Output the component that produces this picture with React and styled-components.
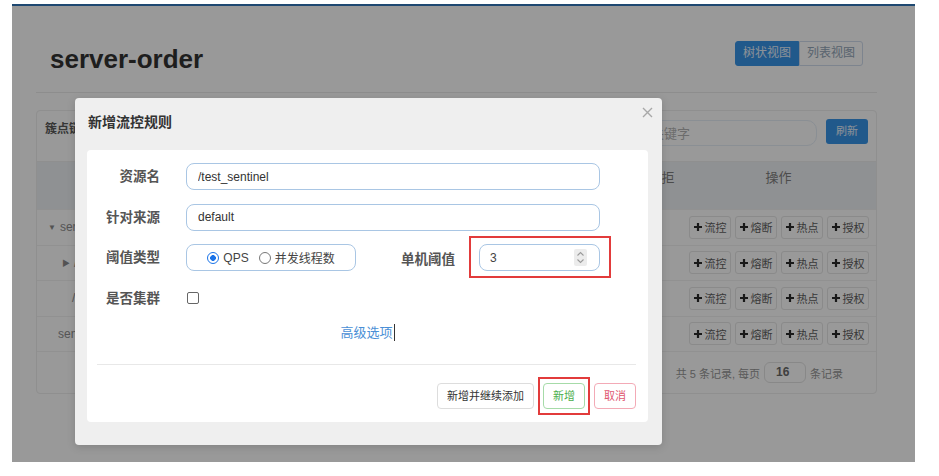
import styled, { createGlobalStyle, css } from "styled-components";

const GlobalStyle = createGlobalStyle`
  html, body {
    margin: 0;
    padding: 0;
    background: #fff;
  }
  body {
    font-family: "Liberation Sans", "Noto Sans CJK SC", sans-serif;
  }
  * {
    box-sizing: border-box;
  }
`;

const rows = [
  { name: "server-order", indent: 11, arrow: "▼" },
  { name: "/test_sentinel", indent: 25, arrow: "▶" },
  { name: "/test_sentinel", indent: 35 },
  { name: "sentinel_default_context", indent: 21 },
];

const columns = ["资源名", "通过QPS", "拒绝QPS", "并发数", "平均RT", "分钟通过", "分钟拒绝", "操作"];

const actions = ["流控", "熔断", "热点", "授权"];

const PlusIcon = () => (
  <svg width="8" height="8" viewBox="0 0 8 8">
    <path d="M4 0v8M0 4h8" stroke="#2b2b2b" strokeWidth="2.2" />
  </svg>
);

const CloseIcon = () => (
  <svg width="11" height="11" viewBox="0 0 11 11">
    <path d="M1 1L10 10M10 1L1 10" stroke="#a8a8a8" strokeWidth="1.4" />
  </svg>
);

const SpinIcon = () => (
  <svg width="13" height="17" viewBox="0 0 13 17">
    <rect width="13" height="17" rx="2" fill="#ececec" />
    <path d="M3.5 6.5L6.5 3.5L9.5 6.5M3.5 10.5L6.5 13.5L9.5 10.5" stroke="#9a9a9a" strokeWidth="1.1" fill="none" />
  </svg>
);

const App = () => {
  return (
    <>
      <GlobalStyle />
      <Frame>
        <TopBar />
        <Body>
          <Content>
            <PageHeader>
              <Title>server-order</Title>
              <ViewSwitch>
                <ViewBtn $active>树状视图</ViewBtn>
                <ViewBtn>列表视图</ViewBtn>
              </ViewSwitch>
            </PageHeader>

            <Panel>
              <PanelHead>
                <PanelTitle>簇点链路</PanelTitle>
                <Search placeholder="请输入关键字" readOnly />
                <RefreshBtn>刷新</RefreshBtn>
              </PanelHead>

              <HeadRow>
                {columns.map((c) => (
                  <HeadCell key={c}>{c}</HeadCell>
                ))}
              </HeadRow>

              {rows.map((r, i) => (
                <Row key={i}>
                  <ResCell style={{ paddingLeft: r.indent }}>
                    {r.arrow && <Arrow>{r.arrow}</Arrow>}
                    {r.name}
                  </ResCell>
                  <Cell />
                  <Cell />
                  <Cell />
                  <Cell />
                  <Cell />
                  <Cell />
                  <ActionCell>
                    {actions.map((a) => (
                      <ActionBtn key={a}>
                        <PlusIcon />
                        {a}
                      </ActionBtn>
                    ))}
                  </ActionCell>
                </Row>
              ))}

              <Pager>
                <span>共 5 条记录, 每页</span>
                <PageSize>16</PageSize>
                <span>条记录</span>
              </Pager>
            </Panel>
          </Content>
          <Scrollbar />
        </Body>

        <Backdrop />

        <Modal>
          <ModalHead>
            <ModalTitle>新增流控规则</ModalTitle>
            <CloseIcon />
          </ModalHead>

          <Card>
            <Form>
              <Label>资源名</Label>
              <Input value="/test_sentinel" readOnly />

              <Label>针对来源</Label>
              <Input value="default" readOnly />

              <Label>阈值类型</Label>
              <Field>
                <RadioGroup>
                  <RadioItem>
                    <Radio $checked />
                    QPS
                  </RadioItem>
                  <RadioItem>
                    <Radio />
                    并发线程数
                  </RadioItem>
                </RadioGroup>
                <InlineLabel>单机阈值</InlineLabel>
                <Marked $inset="-8px -11px -7px -10px">
                  <NumberBox>
                    <span>3</span>
                    <SpinIcon />
                  </NumberBox>
                </Marked>
              </Field>

              <Label>是否集群</Label>
              <Field>
                <Checkbox />
              </Field>
            </Form>

            <AdvancedLink>高级选项</AdvancedLink>
            <Divider />

            <Footer>
              <Button>新增并继续添加</Button>
              <Marked $inset="-6px -5px -6px -5px">
                <Button $tone="green">新增</Button>
              </Marked>
              <Button $tone="red">取消</Button>
            </Footer>
          </Card>
        </Modal>
      </Frame>
    </>
  );
};

export default App;

const Frame = styled.div`
  position: relative;
  width: 903px;
  height: 458px;
  margin: 4px 0 0 12px;
  background: #fff;
  overflow: hidden;
`;

const TopBar = styled.div`
  height: 2px;
  background: #3279bd;
`;

const Body = styled.div`
  display: flex;
  height: 456px;
`;

const Content = styled.div`
  flex: 1;
  padding: 0 26px 0 24px;
`;

const Scrollbar = styled.div`
  width: 12px;
  background: #fff;
`;

const PageHeader = styled.div`
  height: 87px;
  padding: 35px 14px 0;
  display: flex;
  justify-content: space-between;
  align-items: flex-start;
  border-bottom: 1px solid #ececec;
`;

const Title = styled.h1`
  margin: 3px 0 0;
  font-size: 26px;
  line-height: 30px;
  font-weight: bold;
  color: #333;
`;

const ViewSwitch = styled.div`
  display: flex;
`;

const ViewBtn = styled.div`
  height: 25px;
  padding: 0 7px;
  font-size: 12px;
  line-height: 23px;
  border: 1px solid ${(p) => (p.$active ? "#3894e8" : "#d0dced")};
  background: ${(p) => (p.$active ? "#3894e8" : "#fff")};
  color: ${(p) => (p.$active ? "#e8f2fc" : "#93a6b8")};
  &:first-child {
    border-radius: 3px 0 0 3px;
  }
  &:last-child {
    border-radius: 0 3px 3px 0;
  }
`;

const Panel = styled.div`
  margin-top: 17px;
  border: 1px solid #eee;
  border-radius: 4px;
`;

const PanelHead = styled.div`
  height: 51px;
  padding: 9px 8px 0;
  display: flex;
  align-items: flex-start;
  border-bottom: 1px solid #eee;
`;

const PanelTitle = styled.div`
  font-size: 12px;
  line-height: 18px;
  font-weight: bold;
  color: #5a5a5a;
`;

const Search = styled.input`
  margin-left: auto;
  width: 218px;
  height: 26px;
  padding: 0 12px;
  border: 1px solid #e6eef7;
  border-radius: 10px;
  font-size: 13px;
  font-family: inherit;
  &::placeholder {
    color: #b5b5b5;
  }
`;

const RefreshBtn = styled.div`
  margin: -1px 0 0 9px;
  width: 42px;
  height: 25px;
  border-radius: 3px;
  background: #3894e8;
  color: #e8f2fc;
  font-size: 11px;
  line-height: 25px;
  text-align: center;
`;

const gridCols = css`
  display: grid;
  grid-template-columns: 2fr repeat(5, 1fr) 52px 195px;
`;

const HeadRow = styled.div`
  ${gridCols};
  height: 47px;
  background: #eff2f5;
`;

const HeadCell = styled.div`
  padding: 7px 4px 0;
  font-size: 13px;
  line-height: 18px;
  color: #7f7f7f;
  text-align: center;
`;

const Row = styled.div`
  ${gridCols};
  height: 35.5px;
  align-items: center;
  border-top: 1px solid #f2f2f2;
  &:nth-of-type(2) {
    border-top: none;
  }
`;

const ResCell = styled.div`
  display: flex;
  align-items: center;
  gap: 4px;
  font-size: 12px;
  color: #8e8e8e;
  white-space: nowrap;
`;

const Arrow = styled.span`
  font-size: 8px;
  color: #8a8a8a;
`;

const Cell = styled.div``;

const ActionCell = styled.div`
  display: flex;
  justify-content: center;
  gap: 4px;
  padding-left: 2px;
`;

const ActionBtn = styled.div`
  height: 23px;
  padding: 0 4px;
  display: flex;
  align-items: center;
  gap: 2px;
  border: 1px solid #e6e6e6;
  border-radius: 3px;
  background: #fff;
  font-size: 11px;
  color: #5e5e5e;
`;

const Pager = styled.div`
  height: 42px;
  padding-right: 33px;
  display: flex;
  justify-content: flex-end;
  align-items: center;
  gap: 4px;
  border-top: 1px solid #f2f2f2;
  font-size: 11px;
  color: #969696;
`;

const PageSize = styled.div`
  width: 42px;
  height: 21px;
  padding-left: 11px;
  border: 1px solid #e3e3e3;
  border-radius: 6px;
  background: #fff;
  font-size: 12px;
  line-height: 19px;
  font-weight: bold;
  color: #6a6a6a;
`;

const Backdrop = styled.div`
  position: absolute;
  inset: 0;
  background: rgba(0, 0, 0, 0.4);
`;

const Modal = styled.div`
  position: absolute;
  left: 63px;
  top: 94px;
  width: 587px;
  padding-bottom: 23px;
  background: #efefef;
  border-radius: 4px;
  box-shadow: 0 2px 8px rgba(0, 0, 0, 0.15);
`;

const ModalHead = styled.div`
  height: 52px;
  padding: 9px 9px 0 13px;
  display: flex;
  justify-content: space-between;
  align-items: flex-start;
`;

const ModalTitle = styled.div`
  margin-top: 5px;
  font-size: 14px;
  line-height: 20px;
  font-weight: bold;
  color: #333;
`;

const Card = styled.div`
  margin: 0 14px 0 12px;
  padding: 13px 0;
  background: #fff;
  border-radius: 4px;
`;

const Form = styled.div`
  display: grid;
  grid-template-columns: 73px 1fr;
  column-gap: 26px;
  row-gap: 13.5px;
  padding-right: 48px;
`;

const Label = styled.div`
  text-align: right;
  font-size: 13.5px;
  line-height: 27px;
  font-weight: bold;
  color: #555;
`;

const Input = styled.input`
  height: 27px;
  padding: 0 11px;
  border: 1px solid #a9c6e4;
  border-radius: 8px;
  outline: none;
  font-family: inherit;
  font-size: 12px;
  color: #333;
`;

const Field = styled.div`
  display: flex;
  align-items: center;
  height: 27px;
`;

const RadioGroup = styled.div`
  width: 170px;
  height: 27px;
  display: flex;
  justify-content: center;
  align-items: center;
  gap: 10px;
  border: 1px solid #a9c6e4;
  border-radius: 8px;
`;

const RadioItem = styled.label`
  display: flex;
  align-items: center;
  gap: 4px;
  font-size: 12px;
  color: #444;
`;

const Radio = styled.span`
  width: 12px;
  height: 12px;
  border-radius: 50%;
  border: 1.3px solid ${(p) => (p.$checked ? "#1a73e8" : "#777")};
  background: ${(p) =>
    p.$checked ? "radial-gradient(circle, #1a73e8 0 2.6px, #fff 3.1px)" : "#fff"};
`;

const InlineLabel = styled.div`
  margin: 0 24px 0 auto;
  font-size: 13.5px;
  font-weight: bold;
  color: #555;
`;

const Marked = styled.div`
  position: relative;
  &::after {
    content: "";
    position: absolute;
    inset: ${(p) => p.$inset};
    border: 2px solid #e23b3b;
    pointer-events: none;
  }
`;

const NumberBox = styled.div`
  width: 121px;
  height: 27px;
  padding: 0 12px 0 10px;
  display: flex;
  justify-content: space-between;
  align-items: center;
  border: 1px solid #a9c6e4;
  border-radius: 8px;
  font-size: 12px;
  color: #444;
`;

const Checkbox = styled.span`
  margin-left: 1px;
  width: 12px;
  height: 12px;
  border: 1.5px solid #666;
  border-radius: 2px;
`;

const AdvancedLink = styled.div`
  margin-top: 11px;
  text-align: center;
  font-size: 13px;
  line-height: 20px;
  color: #4a8fd6;
  &::after {
    content: "";
    display: inline-block;
    width: 1px;
    height: 17px;
    margin-left: 1px;
    vertical-align: -4px;
    background: #333;
  }
`;

const Divider = styled.div`
  margin: 21px 12px 0 10px;
  height: 1px;
  background: #e8e8e8;
`;

const Footer = styled.div`
  margin-top: 18px;
  padding-right: 12px;
  display: flex;
  justify-content: flex-end;
  gap: 9px;
`;

const tones = {
  plain: { border: "#dddddd", color: "#333" },
  green: { border: "#a6dba8", color: "#4cae4c" },
  red: { border: "#f3aab6", color: "#e0566f" },
};

const Button = styled.div`
  height: 26px;
  padding: 0 9px;
  border: 1px solid ${(p) => tones[p.$tone || "plain"].border};
  border-radius: 4px;
  background: #fff;
  font-size: 11px;
  line-height: 24px;
  color: ${(p) => tones[p.$tone || "plain"].color};
`;
